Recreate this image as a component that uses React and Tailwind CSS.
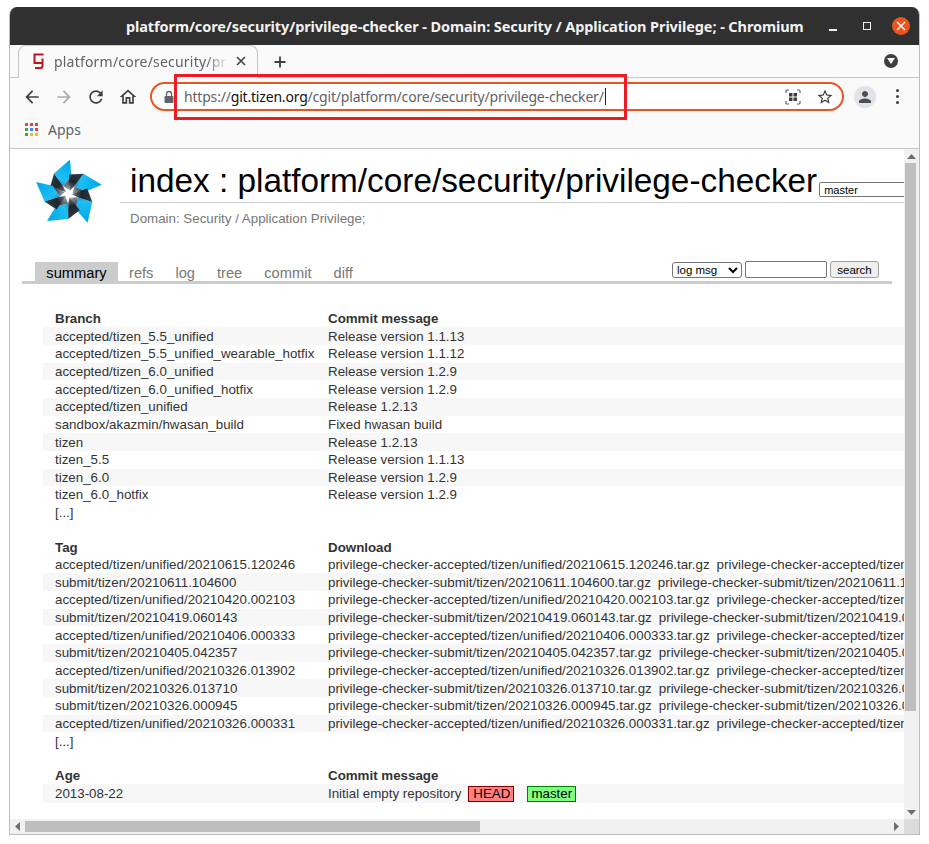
import React from "react";

const branches = [
  ["accepted/tizen_5.5_unified", "Release version 1.1.13"],
  ["accepted/tizen_5.5_unified_wearable_hotfix", "Release version 1.1.12"],
  ["accepted/tizen_6.0_unified", "Release version 1.2.9"],
  ["accepted/tizen_6.0_unified_hotfix", "Release version 1.2.9"],
  ["accepted/tizen_unified", "Release 1.2.13"],
  ["sandbox/akazmin/hwasan_build", "Fixed hwasan build"],
  ["tizen", "Release 1.2.13"],
  ["tizen_5.5", "Release version 1.1.13"],
  ["tizen_6.0", "Release version 1.2.9"],
  ["tizen_6.0_hotfix", "Release version 1.2.9"],
];
const tags = [
  "accepted/tizen/unified/20210615.120246",
  "submit/tizen/20210611.104600",
  "accepted/tizen/unified/20210420.002103",
  "submit/tizen/20210419.060143",
  "accepted/tizen/unified/20210406.000333",
  "submit/tizen/20210405.042357",
  "accepted/tizen/unified/20210326.013902",
  "submit/tizen/20210326.013710",
  "submit/tizen/20210326.000945",
  "accepted/tizen/unified/20210326.000331",
];

const cellA = "pl-[12px] pr-[6px] py-[1.33px] w-[285px] min-w-[285px] text-left";
const cellB = "px-0 py-[1.33px] text-left";
const headA = "pl-[12px] pr-[6px] py-[0.83px] w-[285px] min-w-[285px] text-left font-bold";
const headB = "px-0 py-[0.83px] text-left font-bold";

function Head({ a, b }) {
  return (
    <tr>
      <th className={headA}>{a}</th>
      <th className={headB}>{b}</th>
    </tr>
  );
}
function Row({ shaded, a, children }) {
  return (
    <tr className={shaded ? "bg-[#f7f7f7]" : ""}>
      <td className={cellA}>{a}</td>
      <td className={cellB}>{children}</td>
    </tr>
  );
}
function Spacer() {
  return (
    <tr>
      <td className="py-[1.33px]" colSpan={2}>&nbsp;</td>
    </tr>
  );
}

function Logo() {
  const blade = (
    <g>
      <path d="M41 4.5 L42.5 22 L34 31 L25 18.5 Z" fill="url(#lg1)" />
      <path d="M25 18.5 L34 31 L36.8 37 L21 32.5 Z" fill="url(#lg2)" />
      <path d="M42.5 22 L40 34.8 L34 31 Z" fill="url(#lg3)" />
    </g>
  );
  return (
    <svg width="80" height="80" viewBox="0 0 80 80" className="shrink-0">
      <defs>
        <linearGradient id="lg1" x1="0.7" y1="0" x2="0.3" y2="1">
          <stop offset="0" stopColor="#00a8e8" />
          <stop offset="0.75" stopColor="#1ec0f5" />
          <stop offset="1" stopColor="#0f86b4" />
        </linearGradient>
        <linearGradient id="lg2" x1="0" y1="0" x2="1" y2="1">
          <stop offset="0" stopColor="#33444f" />
          <stop offset="0.6" stopColor="#1c252c" />
          <stop offset="1" stopColor="#6f7b82" />
        </linearGradient>
        <linearGradient id="lg3" x1="0" y1="0" x2="0" y2="1">
          <stop offset="0" stopColor="#1c252c" />
          <stop offset="1" stopColor="#9aa5ab" />
        </linearGradient>
      </defs>
      {[0, 72, 144, 216, 288].map((r) => (
        <g key={r} transform={`rotate(${r} 39.5 39)`}>{blade}</g>
      ))}
    </svg>
  );
}

function Mat({ d, size = 20, color = "#3c4043", className = "" }) {
  return (
    <svg width={size} height={size} viewBox="0 0 24 24" fill={color} className={"shrink-0 " + className}>
      <path d={d} />
    </svg>
  );
}

const BACK = "M20 11H7.83l5.59-5.59L12 4l-8 8 8 8 1.41-1.41L7.83 13H20v-2z";
const FWD = "M12 4l-1.41 1.41L16.17 11H4v2h12.17l-5.58 5.59L12 20l8-8z";
const RELOAD = "M17.65 6.35C16.2 4.9 14.21 4 12 4c-4.42 0-7.99 3.58-7.99 8s3.57 8 7.99 8c3.73 0 6.84-2.55 7.73-6h-2.08c-.82 2.33-3.04 4-5.65 4-3.31 0-6-2.69-6-6s2.69-6 6-6c1.66 0 3.14.69 4.22 1.78L13 11h7V4l-2.35 2.35z";
const HOME = "M12 5.69l5 4.5V18h-2v-6H9v6H7v-7.81l5-4.5M12 3L2 12h3v8h6v-6h2v6h6v-8h3L12 3z";
const STAR = "M22 9.24l-7.19-.62L12 2 9.19 8.63 2 9.24l5.46 4.73L5.82 21 12 17.27 18.18 21l-1.63-7.03L22 9.24zM12 15.4l-3.76 2.27 1-4.28-3.32-2.88 4.38-.38L12 6.1l1.71 4.04 4.38.38-3.32 2.88 1 4.28L12 15.4z";
const PERSON = "M12 12c2.21 0 4-1.79 4-4s-1.79-4-4-4-4 1.79-4 4 1.79 4 4 4zm0 2c-2.67 0-8 1.34-8 4v2h16v-2c0-2.66-5.33-4-8-4z";

function Tri({ dir }) {
  const p = { up: "M0 5 L4.5 0 L9 5 Z", down: "M0 0 L9 0 L4.5 5 Z", left: "M5 0 L5 9 L0 4.5 Z", right: "M0 0 L0 9 L5 4.5 Z" }[dir];
  const vertical = dir === "up" || dir === "down";
  return (
    <svg width={vertical ? 9 : 5} height={vertical ? 5 : 9} viewBox={vertical ? "0 0 9 5" : "0 0 5 9"} className="shrink-0">
      <path d={p} fill="#6e6e6e" />
    </svg>
  );
}

export default function App() {
  const ui = { fontFamily: '"Noto Sans", "Open Sans", sans-serif' };
  const page = { fontFamily: '"Liberation Sans", Arial, sans-serif' };
  return (
    <div className="w-[929px] h-[844px] bg-white overflow-hidden pl-[9px] pt-[7px] relative" style={ui}>
      <div className="w-[911px] h-[828px] flex flex-col rounded-t-[8px] overflow-hidden border border-t-0 border-[#bdbdbd]">
        {/* title bar */}
        <div className="h-[38px] shrink-0 bg-[#303030] flex items-center relative">
          <div className="absolute left-[116px] top-[9px] text-[14.5px] tracking-[-0.1px] leading-[20px] font-bold text-[#f2f2f2] whitespace-nowrap">
            platform/core/security/privilege-checker - Domain: Security / Application Privilege; - Chromium
          </div>
          <div className="ml-auto flex items-center pr-[9px]">
            <div className="w-[8px] h-[1.5px] bg-[#f0f0f0] mt-[8px] mr-[26px]" />
            <div className="w-[8px] h-[8px] border border-[#f0f0f0] mr-[21px]" />
            <div className="w-[18px] h-[18px] rounded-full bg-[#e95420] flex items-center justify-center">
              <svg width="10" height="10" viewBox="0 0 10 10"><path d="M1 1 L9 9 M9 1 L1 9" stroke="#fff" strokeWidth="1.4" /></svg>
            </div>
          </div>
        </div>
        {/* tab strip */}
        <div className="h-[33px] shrink-0 bg-[#fafafa] flex items-end border-b border-[#c8c8c8] relative">
          <div className="ml-[8px] w-[240px] h-[33px] -mb-px bg-[#fafafa] border border-b-0 border-[#c8c8c8] rounded-t-[8px] flex items-center pl-[13px] pr-[11px] pb-[2px]">
            <svg width="13" height="17" viewBox="0 0 13 17" className="shrink-0">
              <path d="M11.5 1.5 H2.5 V10 H10.5 V5.5 M10.5 10 V13 Q10.5 15 8.5 15 H3" fill="none" stroke="#c1121f" strokeWidth="2" />
            </svg>
            <div className="ml-[9px] w-[174px] overflow-hidden whitespace-nowrap text-[14px] tracking-[0.2px] text-[#5f6368] [mask-image:linear-gradient(to_right,black_88%,transparent)]">
              platform/core/security/privilege-checker
            </div>
            <svg width="10" height="10" viewBox="0 0 10 10" className="ml-auto shrink-0"><path d="M1 1 L9 9 M9 1 L1 9" stroke="#44474a" strokeWidth="1.7" /></svg>
          </div>
          <svg width="14" height="14" viewBox="0 0 14 14" className="ml-[15px] mb-[8px] shrink-0"><path d="M7 1.5 V12.5 M1.5 7 H12.5" stroke="#3c4043" strokeWidth="1.8" /></svg>
          <div className="ml-auto mr-[21px] mb-[9px] w-[14px] h-[14px] rounded-full bg-[#3c4043] flex items-center justify-center">
            <svg width="8" height="6" viewBox="0 0 8 6"><path d="M0 0 H8 L4 6 Z" fill="#fff" /></svg>
          </div>
        </div>
        {/* toolbar */}
        <div className="h-[37px] shrink-0 bg-[#fafafa] flex items-center pl-[12px]">
          <Mat d={BACK} size={20} />
          <Mat d={FWD} size={20} color="#a9abad" className="ml-[12px]" />
          <Mat d={RELOAD} size={20} className="ml-[12px]" />
          <Mat d={HOME} size={20} className="ml-[12px]" />
          <div className="ml-[12px] w-[694px] h-[29px] rounded-full border-2 border-[#e95420] bg-white flex items-center pl-[11px] pr-[7px]">
            <svg width="12" height="14" viewBox="0 0 12 14" className="shrink-0">
              <rect x="1.5" y="6" width="9" height="7" rx="1" fill="#5f6368" />
              <path d="M3.5 6 V4 A2.5 2.5 0 0 1 8.5 4 V6" fill="none" stroke="#5f6368" strokeWidth="1.3" />
            </svg>
            <div className="ml-[9px] text-[14px] tracking-[-0.19px] text-[#5f6368] whitespace-nowrap flex items-center">
              <span>https://</span><span className="text-[#111]">git.tizen.org</span><span>/cgit/platform/core/security/privilege-checker/</span>
              <span className="w-px h-[17px] bg-[#222] ml-px" />
            </div>
            <svg width="16" height="16" viewBox="0 0 16 16" className="ml-auto shrink-0 mr-[15px]">
              <path d="M1 4 V2 Q1 1 2 1 H4 M12 1 H14 Q15 1 15 2 V4 M15 12 V14 Q15 15 14 15 H12 M4 15 H2 Q1 15 1 14 V12" fill="none" stroke="#5f6368" strokeWidth="1.2" />
              <rect x="4" y="4" width="3.5" height="3.5" fill="#3c4043" /><rect x="8.5" y="4" width="3.5" height="3.5" fill="#3c4043" />
              <rect x="4" y="8.5" width="3.5" height="3.5" fill="#3c4043" /><rect x="8.5" y="8.5" width="3.5" height="3.5" fill="#3c4043" />
            </svg>
            <Mat d={STAR} size={18} className="mr-[1px]" />
          </div>
          <div className="ml-[10px] w-[22px] h-[22px] rounded-full bg-[#e1e3e6] flex items-center justify-center">
            <Mat d={PERSON} size={18} color="#4a5058" />
          </div>
          <div className="ml-[20px] flex flex-col gap-[3px]">
            <div className="w-[3px] h-[3px] rounded-full bg-[#3c4043]" />
            <div className="w-[3px] h-[3px] rounded-full bg-[#3c4043]" />
            <div className="w-[3px] h-[3px] rounded-full bg-[#3c4043]" />
          </div>
        </div>
        {/* bookmarks */}
        <div className="h-[35px] shrink-0 bg-[#fafafa] flex items-center border-b border-[#c8c8c8] pl-[15px] pb-[3px] -mt-px">
          <svg width="13" height="13" viewBox="0 0 13 13" className="shrink-0">
            {[["#ea4335","#ea4335","#ea4335"],["#34a853","#4285f4","#ea4335"],["#34a853","#fbbc05","#fbbc05"]].map((row, y) =>
              row.map((c, x) => <rect key={x + "-" + y} x={x * 5} y={y * 5} width="3" height="3" fill={c} />)
            )}
          </svg>
          <span className="ml-[10px] text-[14px] text-[#5f6368]">Apps</span>
        </div>
        {/* page area */}
        <div className="flex-1 min-h-0 flex flex-col">
          <div className="flex-1 min-h-0 flex">
            <div className="flex-1 min-w-0 overflow-hidden bg-white text-[13.33px] leading-[15px] text-[#333]" style={page}>
              <div className="flex h-[54px]">
                <div className="w-[110px] shrink-0 pl-[19px] pt-[6px] h-[86px]"><Logo /></div>
                <div className="flex-1 min-w-0 border-b border-[#cccccc] pl-[10px] flex items-end overflow-hidden whitespace-nowrap">
                  <span className="text-[33.33px] leading-[38px] text-black mb-[2px]">index : platform/core/security/privilege-checker</span>
                  <select className="ml-[2px] mb-[5px] h-[15px] w-[120px] shrink-0 border border-[#767676] rounded-[2px] bg-white text-[11px] leading-[13px] text-black" defaultValue="master">
                    <option>master</option>
                  </select>
                </div>
              </div>
              <div className="pl-[120px] pt-[8px] h-[60px] text-[#777777]">Domain: Security / Application Privilege;</div>
              <div className="ml-[12px] w-[870px] border-b-[3px] border-[#cccccc] flex items-end h-[21px] text-[14.67px] leading-[23px] text-[#777777] relative">
                <div className="ml-[13px] w-[83px] h-[19px] bg-[#cccccc] text-black text-center">summary</div>
                <div className="ml-[11px] h-[19px]">refs</div>
                <div className="ml-[22px] h-[19px]">log</div>
                <div className="ml-[22px] h-[19px]">tree</div>
                <div className="ml-[22px] h-[19px]">commit</div>
                <div className="ml-[22px] h-[19px]">diff</div>
                <div className="ml-auto mr-[13px] mb-[3px] flex items-center gap-[3px] text-[11.5px] leading-[14px] text-black">
                  <select className="w-[70px] h-[16px] border border-[#767676] rounded-[3px] bg-white" defaultValue="log msg">
                    <option>log msg</option>
                  </select>
                  <div className="w-[82px] h-[17px] border border-[#767676] rounded-[2px] bg-white" />
                  <button className="w-[49px] h-[17px] border border-[#a0a0a0] rounded-[3px] bg-[#efefef] text-center">search</button>
                </div>
              </div>
              <div className="pl-[33px] pt-[26.6px]">
                <table className="border-collapse whitespace-nowrap">
                  <tbody>
                    <Head a="Branch" b="Commit message" />
                    {branches.map((b, i) => (
                      <Row key={b[0]} shaded={i % 2 === 0} a={b[0]}>{b[1]}</Row>
                    ))}
                    <Row a="[...]" />
                    <Spacer />
                    <Head a="Tag" b="Download" />
                    {tags.map((t, i) => (
                      <Row key={t} shaded={i % 2 === 1} a={t}>
                        <span className="mr-[7px]">privilege-checker-{t}.tar.gz</span>
                        <span>privilege-checker-{t}.zip</span>
                      </Row>
                    ))}
                    <Row shaded={false} a="[...]" />
                    <Spacer />
                    <Head a="Age" b="Commit message" />
                    <tr className="bg-[#f7f7f7]">
                      <td className={cellA}>2013-08-22</td>
                      <td className={cellB}>
                        Initial empty repository
                        <span className="inline-block ml-[7px] pl-[4px] pr-[3px] leading-[14px] border border-[#800000] bg-[#ff8080] text-black">HEAD</span>
                        <span className="inline-block ml-[13px] px-[3px] leading-[14px] border border-[#008000] bg-[#80ff80] text-black">master</span>
                      </td>
                    </tr>
                  </tbody>
                </table>
              </div>
            </div>
            {/* vertical scrollbar */}
            <div className="w-[15px] shrink-0 bg-[#f1f1f1] flex flex-col items-center">
              <div className="h-[14px] flex items-center justify-center"><Tri dir="up" /></div>
              <div className="w-[11px] h-[548px] bg-[#bebebe] mr-[2px]" />
              <div className="mt-auto h-[14px] flex items-center justify-center"><Tri dir="down" /></div>
            </div>
          </div>
          {/* horizontal scrollbar */}
          <div className="h-[15px] shrink-0 bg-[#f1f1f1] flex items-center">
            <div className="w-[15px] flex justify-center"><Tri dir="left" /></div>
            <div className="w-[455px] h-[11px] bg-[#bebebe]" />
            <div className="ml-auto w-[15px] flex justify-center"><Tri dir="right" /></div>
            <div className="w-[15px] h-[15px] bg-[#dcdcdc]" />
          </div>
        </div>
      </div>
      {/* red annotation box */}
      <div className="absolute left-[174px] top-[74px] w-[453px] h-[46px] border-[3px] border-[#ed1c24]" />
    </div>
  );
}
